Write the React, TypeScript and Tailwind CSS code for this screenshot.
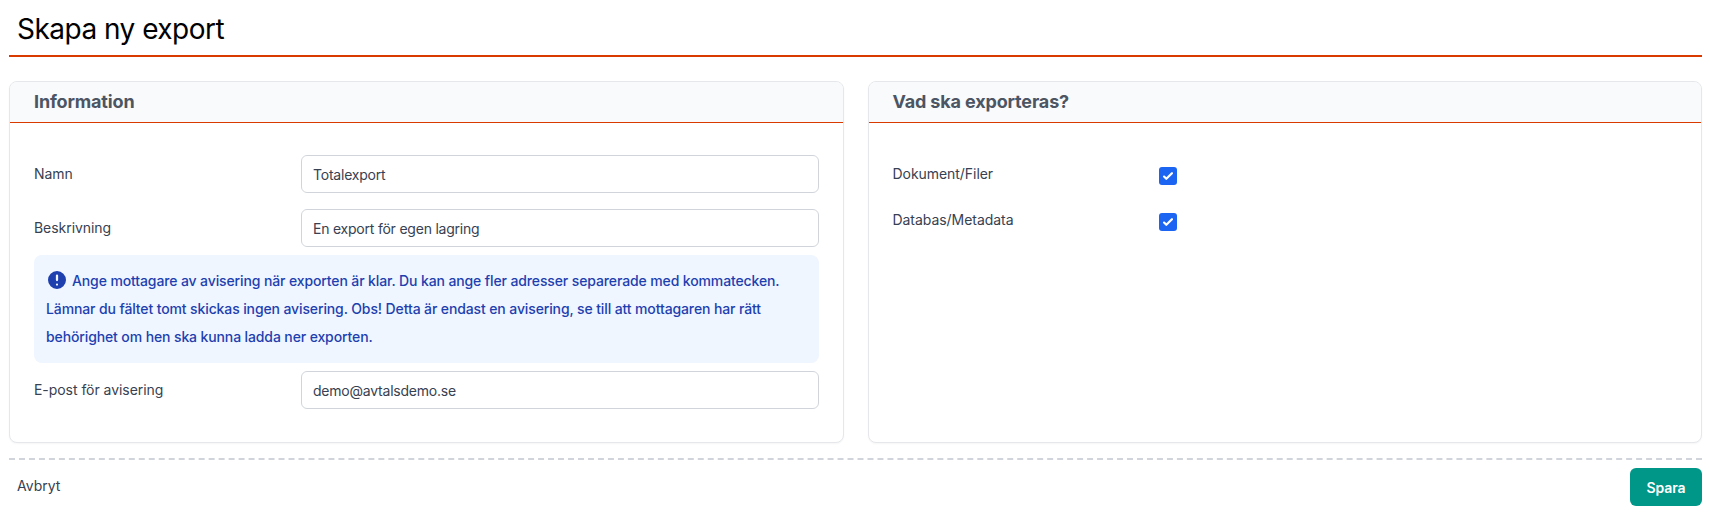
import React from "react";

function Field({ label, value }: { label: string; value: string }) {
  return (
    <div className="flex items-center h-[38px]">
      <label className="w-[267px] shrink-0 text-[14px] leading-5 tracking-[-0.05px] text-[#374151]">{label}</label>
      <div className="flex-1 h-[38px] flex items-center rounded-[6px] border border-[#d1d5db] bg-white pl-[11px] pr-3 text-[14px] tracking-[-0.22px] text-[#374151]">
        {value}
      </div>
    </div>
  );
}

function Check({ label }: { label: string }) {
  return (
    <div className="flex items-start h-[18px]">
      <span className="w-[266px] shrink-0 text-[14px] leading-[17px] tracking-[-0.05px] text-[#374151]">{label}</span>
      <span className="mt-[2px] w-[18px] h-[18px] rounded-[3px] bg-[#1c64f2] flex items-center justify-center">
        <svg viewBox="0 0 16 16" className="w-[18px] h-[18px]" fill="#fff">
          <path d="M12.207 4.793a1 1 0 0 1 0 1.414l-5 5a1 1 0 0 1-1.414 0l-2-2a1 1 0 0 1 1.414-1.414L6.5 9.086l4.293-4.293a1 1 0 0 1 1.414 0z" />
        </svg>
      </span>
    </div>
  );
}

function Card({ title, children }: { title: string; children: React.ReactNode }) {
  return (
    <section className="flex-1 min-w-0 h-[362px] rounded-[8px] border border-[#e5e7eb] bg-white overflow-hidden shadow-[0_1px_2px_rgba(0,0,0,0.04)]">
      <h2 className="h-[41px] pl-6 pt-[8px] bg-[#f9fafb] border-b border-[#d83a00] text-[18px] leading-[24px] font-bold tracking-[-0.15px] text-[#4b5563]">
        {title}
      </h2>
      {children}
    </section>
  );
}

export default function App() {
  return (
    <div className="w-[1710px] h-[516px] bg-white pl-[9px] pr-[8px] overflow-hidden font-['Inter',sans-serif]">
      <h1 className="h-[57px] pl-2 pt-[11px] border-b-2 border-[#d83a00] text-[28px] leading-[36px] font-normal tracking-[-0.52px] text-black">
        Skapa ny export
      </h1>
      <div className="flex gap-6 mt-[24px]">
        <Card title="Information">
          <div className="px-6 pt-[32px] flex flex-col">
            <Field label="Namn" value="Totalexport" />
            <div className="mt-4"><Field label="Beskrivning" value="En export för egen lagring" /></div>
            <div className="mt-2 h-[108px] rounded-[8px] bg-[#eff6ff] px-3 pt-[12px] text-[14px] leading-[28px] font-medium tracking-[-0.12px] text-[#1e40af]">
              <svg viewBox="2 2 16 16" className="inline-block w-[18px] h-[18px] ml-[2px] mr-[6px] align-[-3px]" fill="#1e40af">
                <path fillRule="evenodd" clipRule="evenodd" d="M18 10a8 8 0 1 1-16 0 8 8 0 0 1 16 0zm-7 4a1 1 0 1 1-2 0 1 1 0 0 1 2 0zm-1-9a1 1 0 0 0-1 1v4a1 1 0 1 0 2 0V6a1 1 0 0 0-1-1z" />
              </svg>
              Ange mottagare av avisering när exporten är klar. Du kan ange fler adresser separerade med kommatecken. Lämnar du fältet tomt skickas ingen avisering. Obs! Detta är endast en avisering, se till att mottagaren har rätt behörighet om hen ska kunna ladda ner exporten.
            </div>
            <div className="mt-2"><Field label="E-post för avisering" value="demo@avtalsdemo.se" /></div>
          </div>
        </Card>
        <Card title="Vad ska exporteras?">
          <div className="px-6 pt-[42px] flex flex-col gap-[28px]">
            <Check label="Dokument/Filer" />
            <Check label="Databas/Metadata" />
          </div>
        </Card>
      </div>
      <div className="mt-[15px] border-t-2 border-dashed border-[#d1d5db] flex items-start justify-between pt-[8px]">
        <a className="pl-2 mt-[8px] text-[14px] leading-5 text-[#374151]">Avbryt</a>
        <button className="w-[72px] h-[38px] rounded-[6px] bg-[#009688] text-white text-[14px] font-semibold tracking-[-0.1px]">Spara</button>
      </div>
    </div>
  );
}
